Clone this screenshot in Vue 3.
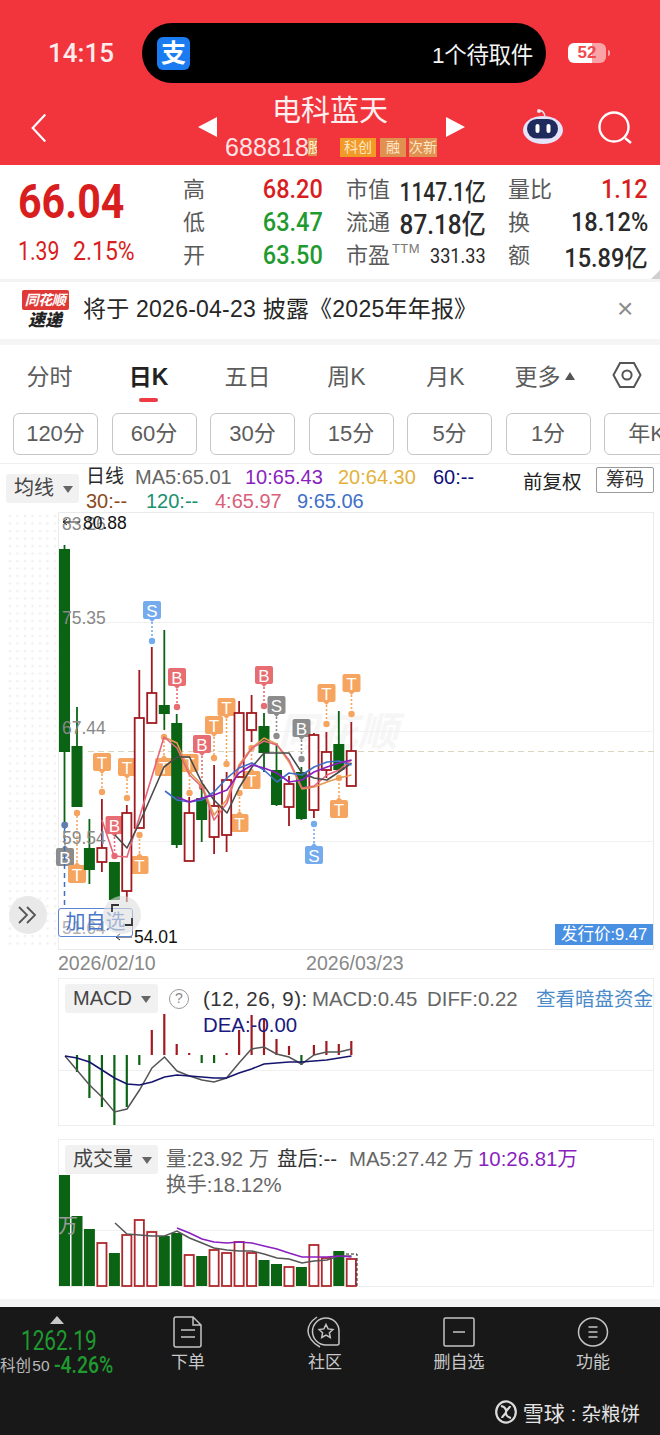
<script setup>
// 行情详情页：K 线、MACD、成交量
const step = 12.47
const cx = (i) => +(64.5 + i * step).toFixed(1)
const pts = (list) => list.map((p) => p.join(',')).join(' ')

// [实体上沿, 实体下沿, 上影, 下影, 是否阳线]
const candles = [
  [549, 752, 545, 823, 0], [746, 807, 707, 807, 0], [848, 870, 819, 884, 0], [848, 862, 799, 872, 1],
  [862, 900, 862, 900, 0], [813, 891, 805, 902, 1], [718, 828, 670, 828, 1], [693, 723, 647, 723, 1],
  [705, 714, 630, 730, 0], [723, 845, 714, 848, 0], [813, 861, 797, 861, 1], [798, 820, 788, 842, 0],
  [806, 837, 765, 854, 1], [780, 835, 772, 852, 1], [713, 777, 701, 777, 1], [713, 730, 695, 742, 1],
  [726, 753, 713, 772, 0], [770, 805, 743, 806, 0], [784, 807, 776, 826, 1], [772, 819, 767, 820, 0],
  [735, 810, 733, 818, 1], [752, 770, 732, 778, 1], [744, 770, 711, 772, 0], [751, 786, 722, 786, 1],
]

const T = '#f6a561'
const B = '#e76d72'
const S = '#74abec'
const G = '#8c8c8c'
const markers = [
  { x: 65, y: 857, d: 825, t: 'B', c: G },
  { x: 77, y: 874, d: 813, t: 'T', c: T },
  { x: 102, y: 762, d: 792, t: 'T', c: T },
  { x: 114.5, y: 825, d: 856, t: 'B', c: B },
  { x: 127, y: 767, d: 798, t: 'T', c: T },
  { x: 139.5, y: 865, d: 835, t: 'T', c: T },
  { x: 152, y: 610, d: 641, t: 'S', c: S },
  { x: 164, y: 767, d: 737, t: 'T', c: T },
  { x: 177, y: 677, d: 707, t: 'B', c: B },
  { x: 189.5, y: 763, d: 793, t: 'T', c: T },
  { x: 202, y: 744, d: 787, t: 'B', c: B },
  { x: 214, y: 725, d: 758, t: 'T', c: T },
  { x: 226.5, y: 707, d: 764, t: 'T', c: T },
  { x: 239.5, y: 823, d: 793, t: 'T', c: T },
  { x: 251.5, y: 780, d: 748, t: 'T', c: T },
  { x: 264, y: 675, d: 706, t: 'B', c: B },
  { x: 276.5, y: 705, d: 736, t: 'S', c: G },
  { x: 301.5, y: 728, d: 759, t: 'B', c: G },
  { x: 314, y: 855, d: 824, t: 'S', c: S },
  { x: 326.5, y: 693, d: 724, t: 'T', c: T },
  { x: 339, y: 809, d: 778, t: 'T', c: T },
  { x: 351.5, y: 683, d: 714, t: 'T', c: T },
]

const maLines = [
  { c: '#e59a50', p: [[164, 737], [177, 743], [189.5, 772], [202, 785], [214, 815], [226.5, 800], [239, 765], [251.5, 748], [264, 738], [276.5, 744], [289, 762], [302, 789], [314, 787], [327, 782], [339, 778], [351.5, 775]] },
  { c: '#e5667a', p: [[102, 820], [114, 856], [127, 857], [139.5, 817], [164, 737], [177, 748], [189.5, 775], [202, 787], [214, 820], [227, 803], [239, 767], [252, 748], [264, 741], [277, 745], [289, 760], [302, 788], [314, 786], [327, 775], [339, 770], [351.5, 760]] },
  { c: '#4a4a4a', p: [[115, 835], [127, 848], [139.5, 823], [164, 767], [177, 757], [189.5, 757], [202, 783], [214, 800], [227, 813], [239, 788], [252, 767], [264, 753], [277, 753], [289, 753], [302, 773], [314, 778], [327, 780], [339, 772], [351.5, 763]] },
  { c: '#3f6fc6', p: [[165, 791], [177, 800], [189.5, 802], [202, 800], [214, 792], [227, 778], [239, 768], [252, 763], [264, 770], [277, 782], [289, 773], [302, 775], [314, 767], [327, 762], [339, 761], [351.5, 765]] },
  { c: '#8a1fc0', p: [[177, 797], [189.5, 802], [202, 798], [214, 795], [227, 790], [239, 773], [252, 765], [264, 768], [277, 773], [289, 782], [302, 780], [314, 772], [327, 767], [339, 763], [351.5, 760]] },
]

const macdZero = 1055
const macdBars = [null, 1072, 1098, 1107, 1125, 1107, 1065, 1030, 1014, 1044, 1053, 1063, 1063, 1053, 1030, 1015, 1018, 1039, 1046, 1065, 1045, 1041, 1044, 1041]
const diff = [[65, 1056], [89.5, 1085], [102, 1097], [114.5, 1112], [127, 1109], [139.5, 1090], [152, 1068], [164.5, 1057], [177, 1071], [189.5, 1076], [202, 1080], [214, 1082], [226.5, 1078], [239, 1063], [251.5, 1049], [264, 1047], [276.5, 1054], [289, 1057], [301.5, 1064], [314, 1055], [326.5, 1052], [339, 1052], [351.5, 1049]]
const dea = [[65, 1056], [77, 1058], [89.5, 1062], [102, 1070], [114.5, 1078], [127, 1084], [139.5, 1085], [152, 1082], [164.5, 1077], [177, 1075], [189.5, 1076], [202, 1077], [214, 1078], [226.5, 1078], [239, 1073], [251.5, 1069], [264, 1064], [276.5, 1063], [289, 1062], [301.5, 1062], [314, 1061], [326.5, 1060], [339, 1058], [351.5, 1056]]

// [顶部, 是否阳线]
const volumes = [[1174, 0], [1215, 0], [1228, 0], [1242, 1], [1252, 0], [1234, 1], [1219, 1], [1231, 1], [1235, 0], [1232, 0], [1254, 1], [1255, 0], [1249, 1], [1252, 1], [1241, 1], [1252, 1], [1259, 0], [1263, 0], [1266, 1], [1266, 0], [1244, 1], [1257, 1], [1250, 0], [1258, 1]]
const volMa5 = [[115, 1222], [127, 1233], [139.5, 1234], [152, 1235], [164.5, 1235], [177, 1230], [189.5, 1237], [202, 1242], [214, 1247], [227, 1249], [239, 1250], [252, 1250], [264, 1253], [277, 1257], [289, 1258], [302, 1262], [314, 1260], [327, 1259], [339, 1255], [351.5, 1255]]
const volMa10 = [[177, 1227], [189.5, 1232], [202, 1238], [214, 1241], [227, 1242], [239, 1241], [252, 1242], [264, 1245], [277, 1248], [289, 1252], [302, 1256], [314, 1256], [327, 1256], [339, 1255], [351.5, 1256]]

const tabs = ['分时', '日K', '五日', '周K', '月K']
const periods = ['120分', '60分', '30分', '15分', '5分', '1分', '年K']
const axisLabels = [['83.26', 530], ['75.35', 624], ['67.44', 734], ['59.54', 844], ['51.64', 934]]

const quoteRows = [
  { a: '高', v: '68.20', vc: 'red', b: '市值', w: '1147.1亿', wc: 'w-norm', c: '量比', x: '1.12', xc: 'red' },
  { a: '低', v: '63.47', vc: 'green', b: '流通', w: '87.18亿', wc: 'w-big', c: '换', x: '18.12%', xc: 'dark' },
  { a: '开', v: '63.50', vc: 'green', b: '市盈', ttm: true, w: '331.33', wc: 'w-small', c: '额', x: '15.89亿', xc: 'dark' },
]
</script>

<template>
  <div class="page">
    <header class="hero">
      <div class="status">
        <span class="time">14:15</span>
        <div class="island">
          <span class="alipay">支</span>
          <span class="island-text">1个待取件</span>
        </div>
        <span class="battery">52</span>
        <i class="battery-nib"></i>
      </div>
      <div class="nav">
        <svg class="back" viewBox="0 0 20 34" fill="none" stroke="#fff" stroke-width="2.4">
          <path d="M17 2 3 17l14 15" />
        </svg>
        <i class="arrow-left"></i>
        <div class="stock">
          <div class="stock-name">电科蓝天</div>
          <div class="stock-sub">
            <span class="stock-code">688818</span><span class="clip-tag">股</span>
            <span class="tag tag-first">科创</span>
            <span class="tag">融</span>
            <span class="tag tag-last">次新</span>
          </div>
        </div>
        <i class="arrow-right"></i>
        <svg class="robot" viewBox="0 0 40 36">
          <path d="M16 3c3-1 5 1 6 5" stroke="#efe9f8" stroke-width="1.4" fill="none" />
          <circle cx="16" cy="3" r="2" fill="#f3e7ee" />
          <ellipse cx="20" cy="22" rx="20" ry="14" fill="#e6e4fb" />
          <rect x="4" y="11" width="31" height="19.5" rx="9.7" fill="#1f2b5c" />
          <rect x="12.5" y="16" width="4" height="9" rx="2" fill="#fff" />
          <rect x="23.5" y="16" width="4" height="9" rx="2" fill="#fff" />
        </svg>
        <svg class="search" viewBox="0 0 34 34" fill="none" stroke="#fff" stroke-width="2.4">
          <circle cx="16" cy="16" r="14.5" />
          <path d="m27 27 6 5" />
        </svg>
      </div>
    </header>

    <section class="quote">
      <div class="price-box">
        <div class="price num">66.04</div>
        <div class="change"><span class="num">1.39</span><span class="num">2.15%</span></div>
      </div>
      <div class="quote-grid">
        <template v-for="row in quoteRows" :key="row.a">
          <span class="q-label">{{ row.a }}</span>
          <span class="q-val num" :class="row.vc">{{ row.v }}</span>
          <span class="q-label q-mid">{{ row.b }}<sup v-if="row.ttm" class="ttm">TTM</sup></span>
          <span class="q-val q-right num dark" :class="row.wc">{{ row.w }}</span>
          <span class="q-label q-third">{{ row.c }}</span>
          <span class="q-val q-last num" :class="row.xc">{{ row.x }}</span>
        </template>
      </div>
      <i class="corner"></i>
    </section>

    <section class="notice">
      <div class="notice-logo">
        <span class="logo-top">同花顺</span>
        <span class="logo-bottom">速递</span>
      </div>
      <span class="notice-text">将于 2026-04-23 披露《2025年年报》</span>
      <span class="notice-close">×</span>
    </section>

    <nav class="tabs">
      <span v-for="t in tabs" :key="t" class="tab" :class="{ active: t === '日K' }">{{ t }}</span>
      <span class="tab">更多<i class="more-up"></i></span>
      <span class="tab tab-icon">
        <svg width="30" height="28" viewBox="0 0 30 28" fill="none" stroke="#555" stroke-width="2">
          <path d="M1.5 14 8 2h14l6.5 12L22 26H8z" />
          <circle cx="15" cy="14" r="4.6" />
        </svg>
      </span>
    </nav>

    <div class="periods">
      <span v-for="p in periods" :key="p" class="period">{{ p }}</span>
    </div>

    <div class="legend">
      <span class="select select-ma">均线<i class="down"></i></span>
      <div class="legend-lines">
        <div class="legend-line">
          <span class="dark w-a">日线</span>
          <span class="c-ma5 w-b">MA5:65.01</span>
          <span class="c-10 w-c">10:65.43</span>
          <span class="c-20 w-d">20:64.30</span>
          <span class="c-60">60:--</span>
        </div>
        <div class="legend-line">
          <span class="c-30 w-e">30:--</span>
          <span class="c-120 w-f">120:--</span>
          <span class="c-4 w-g">4:65.97</span>
          <span class="c-9">9:65.06</span>
        </div>
      </div>
      <span class="fq">前复权</span>
      <span class="chip">筹码</span>
    </div>

    <div class="kline">
      <svg class="chart" width="660" height="438" viewBox="0 512 660 438">
        <defs>
          <pattern id="dots" x="8" y="514" width="7.5" height="7.5" patternUnits="userSpaceOnUse">
            <circle cx="2" cy="2" r="1.3" fill="#f1f1f1" />
          </pattern>
        </defs>
        <rect x="8" y="514" width="50" height="432" fill="url(#dots)" />
        <text x="278" y="746" class="mark-bg">同花顺</text>
        <rect x="58.5" y="512.5" width="595" height="437" fill="none" stroke="#eaeaea" />
        <path d="M58 622.5h596M58 731.5h596M58 841.5h596" stroke="#f0f0f0" />
        <path d="M88 751.5h566" stroke="#d9d5bf" stroke-dasharray="6 4" />

        <g v-for="(m, i) in markers" :key="i">
          <line :x1="m.x" :x2="m.x" :y1="m.y" :y2="m.d" :stroke="m.c" stroke-width="1.6" stroke-dasharray="2 2" />
          <circle :cx="m.x" :cy="m.d" r="3.2" :fill="m.c" />
          <rect :x="m.x - 9" :y="m.y - 9" width="18" height="18" rx="2" :fill="m.c" />
          <path :d="`M${m.x - 3} ${m.y + (m.d > m.y ? 9 : -9)}h6l-3 ${m.d > m.y ? 3 : -3}z`" :fill="m.c" />
          <text :x="m.x" :y="m.y + 6.5" class="mark-t">{{ m.t }}</text>
        </g>

        <g v-for="(c, i) in candles" :key="'c' + i">
          <line :x1="cx(i)" :x2="cx(i)" :y1="c[2]" :y2="c[3]" :stroke="c[4] ? '#a01a20' : '#0b6413'" stroke-width="1.8" />
          <rect v-if="c[4]" :x="cx(i) - 4.6" :y="c[0]" width="9.2" :height="c[1] - c[0]" fill="#fff" stroke="#a01a20" stroke-width="1.8" />
          <rect v-else :x="cx(i) - 5.5" :y="c[0]" width="11" :height="c[1] - c[0]" fill="#0b6413" />
        </g>

        <polyline v-for="l in maLines" :key="l.c" :points="pts(l.p)" fill="none" :stroke="l.c" stroke-width="1.6" stroke-linejoin="round" />

        <path d="M64.5 828v80" stroke="#3f6fc6" stroke-width="1.5" stroke-dasharray="5 4" />
        <circle cx="64.5" cy="825" r="3.2" fill="#5f7fb0" />

        <text v-for="a in axisLabels" :key="a[0]" x="62" :y="a[1]" class="axis">{{ a[0] }}</text>

        <path d="M80 522H63m4-3-4 3 4 3" fill="none" stroke="#222" stroke-width="1" />
        <text x="83" y="529" class="extreme">80.88</text>
        <path d="M132 937h-16m4-3-4 3 4 3" fill="none" stroke="#222" stroke-width="1" />
        <text x="134" y="943" class="extreme">54.01</text>
      </svg>
      <button class="add-btn">加自选</button>
      <span class="fold">
        <svg width="24" height="20" viewBox="0 0 24 20" fill="none" stroke="#555" stroke-width="1.8">
          <path d="m3 2 8 8-8 8M11 2l8 8-8 8" />
        </svg>
      </span>
      <span class="focus">
        <svg width="22" height="22" viewBox="0 0 22 22" fill="none" stroke="#333" stroke-width="1.8">
          <path d="M1 8V1h7M21 14v7h-7" />
        </svg>
      </span>
      <span class="ipo">发行价:9.47</span>
    </div>

    <div class="dates">
      <span>2026/02/10</span>
      <span>2026/03/23</span>
    </div>

    <div class="panel panel-macd">
      <svg class="chart" width="660" height="150" viewBox="0 977 660 150">
        <path d="M58 978.5h596M58 1125.5h596M58.5 978v148M653.5 978v148" stroke="#eeeeee" fill="none" />
        <path d="M58 1070.5h596" stroke="#f0f0f0" />
        <g v-for="(y, i) in macdBars" :key="i">
          <line v-if="y !== null" :x1="cx(i)" :x2="cx(i)" :y1="macdZero" :y2="y"
            :stroke="(i >= 1 && i <= 6) || i === 11 || i === 12 || i === 19 ? '#0b6413' : '#a01a20'" stroke-width="2.2" />
        </g>
        <polyline :points="pts(diff)" fill="none" stroke="#555" stroke-width="1.5" />
        <polyline :points="pts(dea)" fill="none" stroke="#14146e" stroke-width="1.6" />
      </svg>
      <div class="panel-head macd-head">
        <span class="select">MACD<i class="down"></i></span>
        <span class="help">?</span>
        <div class="macd-lines">
          <div class="legend-line">
            <span class="ink w-params">(12, 26, 9):</span>
            <span class="c-ma5 w-macd">MACD:0.45</span>
            <span class="c-ma5">DIFF:0.22</span>
            <span class="c-link">查看暗盘资金</span>
          </div>
          <div class="legend-line c-dea">DEA:-0.00</div>
        </div>
      </div>
    </div>

    <div class="panel panel-vol">
      <svg class="chart" width="660" height="149" viewBox="0 1137 660 149">
        <path d="M58 1138.5h596M58 1285.5h596M58.5 1138v148M653.5 1138v148" stroke="#eeeeee" fill="none" />
        <path d="M58 1229.5h596" stroke="#f0f0f0" />
        <g v-for="(v, i) in volumes" :key="i">
          <rect v-if="v[1]" :x="cx(i) - 4.6" :y="v[0]" width="9.2" :height="1285 - v[0]" fill="#fff" stroke="#b0282d" stroke-width="1.8" />
          <rect v-else :x="cx(i) - 5.5" :y="v[0]" width="11" :height="1285 - v[0]" fill="#0b6413" />
        </g>
        <text x="58" y="1232" class="unit">万</text>
        <path d="M346 1253h11v32" fill="none" stroke="#222" stroke-dasharray="3 2" />
        <polyline :points="pts(volMa5)" fill="none" stroke="#555" stroke-width="1.5" />
        <polyline :points="pts(volMa10)" fill="none" stroke="#8a1fc0" stroke-width="1.6" />
      </svg>
      <div class="panel-head vol-head">
        <span class="select">成交量<i class="down"></i></span>
        <div class="vol-lines">
          <div class="legend-line">
            <span class="c-ma5 w-vol">量:23.92 万</span>
            <span class="ink w-after">盘后:--</span>
            <span class="c-ma5 w-ma">MA5:27.42 万</span>
            <span class="c-10">10:26.81万</span>
          </div>
          <div class="legend-line c-ma5">换手:18.12%</div>
        </div>
      </div>
    </div>

    <div class="gap"></div>

    <footer class="bottom">
      <div class="bottom-row">
        <div class="index">
          <i class="index-up"></i>
          <div class="index-value num">1262.19</div>
          <div class="index-sub"><span>科创 50</span><b class="num">-4.26%</b></div>
        </div>
        <div class="action">
          <svg width="30" height="32" viewBox="0 0 30 32" fill="none" stroke="#c4c4c4" stroke-width="1.5">
            <path d="M3 1h17l8 8v20a2 2 0 0 1-2 2H3a2 2 0 0 1-2-2V3a2 2 0 0 1 2-2zM20 1v8h8M8 14h14M8 21h14" />
          </svg>
          <span>下单</span>
        </div>
        <div class="action action-wide">
          <svg width="36" height="32" viewBox="0 0 36 32" fill="none" stroke="#c4c4c4" stroke-width="1.5">
            <path d="M19 2a13 13 0 0 1 13 13v12a2 2 0 0 1-2 2H19a13.5 13.500 0 1 1 0-27z" />
            <path d="M10 1C4 5 1 10 1 15s4 12 12 16" />
            <path d="m19 8.5 2.100 4.400 4.800.6-3.500 3.300.9 4.700-4.300-2.300-4.300 2.300.9-4.700-3.500-3.300 4.800-.6z" />
          </svg>
          <span>社区</span>
        </div>
        <div class="action">
          <svg width="32" height="30" viewBox="0 0 32 30" fill="none" stroke="#c4c4c4" stroke-width="1.5">
            <rect x="1" y="1" width="30" height="28" rx="1.5" />
            <path d="M10 15h12" />
          </svg>
          <span>删自选</span>
        </div>
        <div class="action">
          <svg width="32" height="30" viewBox="0 0 32 30" fill="none" stroke="#c4c4c4" stroke-width="1.5">
            <ellipse cx="16" cy="15" rx="14.5" ry="14" />
            <path d="M11.5 10h9M11.5 15h9M11.5 20h9" />
          </svg>
          <span>功能</span>
        </div>
      </div>
      <div class="snowball">
        <svg width="22" height="24" viewBox="0 0 22 24" fill="none" stroke="#dcdcdc" stroke-width="2.2">
          <ellipse cx="11" cy="12" rx="9.8" ry="10.6" />
          <path d="M6 6c5 1 7 6 3 9-1 1-2 2-2 3M16 18c-5-1-7-6-3-9 1-1 2-2 2-3" />
        </svg>
        <span class="snow-name">雪球</span>
        <span class="snow-user">: 杂粮饼</span>
      </div>
    </footer>
  </div>
</template>

<style>
html, body { margin: 0; background: #fff; }
</style>

<style scoped>
.page {
  width: 660px;
  height: 1435px;
  overflow: hidden;
  position: relative;
  font-family: "Liberation Sans", "Noto Sans CJK SC", sans-serif;
  color: #222;
  background: #fff;
}
.num {
  font-family: Roboto, "Liberation Sans", "Noto Sans CJK SC", sans-serif;
  font-weight: 500;
  display: inline-block;
  white-space: nowrap;
  transform-origin: left center;
}
.red { color: #d81e1e; }
.green { color: #1f9a2f; }
.dark { color: #2a2a2a; }
.ink { color: #333; }

/* 顶部红色区 */
.hero { height: 165px; background: #f2343d; color: #fff; box-sizing: border-box; padding-top: 23px; }
.status { display: flex; align-items: center; height: 60px; padding-left: 48px; }
.time { width: 94px; font-family: Roboto, sans-serif; font-size: 26px; font-weight: 500; color: #fdecec; }
.island {
  width: 404px; height: 60px; background: #000; border-radius: 30px;
  display: flex; align-items: center; justify-content: space-between;
  padding: 0 13px 0 15px; box-sizing: border-box;
}
.alipay {
  width: 33px; height: 33px; border-radius: 6px; background: #1a7cf0; color: #fff;
  font-size: 25px; line-height: 33px; text-align: center; font-weight: 700;
}
.island-text { font-size: 22.5px; color: #f4f4f4; letter-spacing: -.3px; }
.battery {
  margin-left: 22px; width: 38px; height: 20px; border-radius: 6px;
  background: linear-gradient(90deg, #fff 0 64%, #f9a3a6 64%);
  color: #ee4a50; font-size: 17px; font-weight: 700; line-height: 20px; text-align: center;
}
.battery-nib { width: 2px; height: 6px; margin-left: 2px; background: #f9a3a6; border-radius: 0 2px 2px 0; }

.nav { display: flex; align-items: flex-start; height: 82px; padding-left: 30px; }
.back { width: 18px; height: 32px; margin-top: 29px; }
.arrow-left, .arrow-right { width: 0; height: 0; border-top: 10px solid transparent; border-bottom: 10px solid transparent; margin-top: 34px; }
.arrow-left { border-right: 19px solid #fff; margin-left: 150px; }
.arrow-right { border-left: 19px solid #fff; }
.stock { width: 229px; padding-top: 11px; }
.stock-name { font-size: 29px; line-height: 34px; text-align: center; width: 226px; color: #fff0f0; }
.stock-sub { display: flex; align-items: center; height: 20px; margin-top: 9px; padding-left: 8px; }
.stock-code { font-size: 25px; letter-spacing: .1px; color: #fde3e3; width: 83px; overflow: hidden; }
.clip-tag { width: 9px; height: 18px; overflow: hidden; background: #e0904f; font-size: 14px; line-height: 18px; color: #fff3d0; }
.tag { height: 19px; line-height: 19px; width: 26px; margin-left: 4px; background: #e0904f; color: #ffe8c8; font-size: 14px; text-align: center; overflow: hidden; }
.tag-first { margin-left: 23px; width: 36px; background: #f29a26; }
.tag-last { width: 28px; white-space: nowrap; margin-left: 3px; }
.robot { width: 40px; height: 36px; margin: 25px 0 0 58px; }
.search { width: 34px; height: 34px; margin: 28px 0 0 35px; }

/* 报价 */
.quote { height: 114px; display: flex; position: relative; }
.price-box { width: 183px; padding-left: 18px; box-sizing: border-box; }
.price { font-size: 49px; line-height: 56px; margin-top: 9px; color: #d81e1e; font-weight: 700; transform: scaleX(.84); display: block; }
.change { display: flex; font-size: 25px; line-height: 30px; margin-top: 7px; color: #d81e1e; }
.change .num { font-weight: 400; transform: scaleX(.85); }
.change .num:first-child { width: 55px; }
.change .num:last-child { transform: scaleX(.92); }
.quote-grid {
  display: grid; grid-template-columns: 81px 59px 23px 44px 96px 22px 44px 96px;
  grid-auto-rows: 33px; padding-top: 8px; align-items: center;
}
.q-label { font-size: 22px; color: #5a5a5a; white-space: nowrap; margin-bottom: 6px; }
.q-val { font-size: 25px; justify-self: end; transform-origin: right center; transform: scaleX(.94); }
.q-mid { grid-column: 3 / 5; padding-left: 23px; position: relative; }
.q-right { grid-column: 5; }
.q-third { grid-column: 6 / 8; padding-left: 22px; }
.q-last { grid-column: 8; }
.w-norm { transform: scaleX(.84); }
.w-big { font-size: 27px; transform: scaleX(.9); }
.w-small { font-size: 21px; font-weight: 400; transform: scaleX(.86); }
.ttm { position: absolute; left: 69px; top: 4px; font-size: 13px; line-height: 15px; color: #777; letter-spacing: .4px; }
.corner { position: absolute; right: 0; bottom: 0; width: 0; height: 0; border-left: 9px solid transparent; border-bottom: 9px solid #cfcfcf; }

/* 提示条 */
.notice {
  height: 66px; display: flex; align-items: center; box-sizing: border-box;
  border-top: 3px solid #f3f3f3; border-bottom: 6px solid #f5f5f5; padding-left: 21px; position: relative;
}
.notice-logo { width: 48px; display: flex; flex-direction: column; align-items: center; }
.logo-top { width: 47px; height: 20px; line-height: 20px; background: #e03a36; color: #fff; font-size: 14px; font-weight: 700; font-style: italic; text-align: center; border-radius: 2px; letter-spacing: -.5px; }
.logo-bottom { font-size: 17px; line-height: 20px; font-weight: 900; font-style: italic; color: #222; margin-top: 1px; }
.notice-text { margin: 0 0 7px 14px; font-size: 23px; color: #262626; white-space: nowrap; letter-spacing: .23px; }
.notice-close { position: absolute; left: 617px; top: 10px; font-size: 28px; line-height: 34px; color: #8c8c8c; }

/* 周期 */
.tabs { display: flex; height: 65px; align-items: center; }
.tab { width: 99px; text-align: center; font-size: 23px; color: #5c5c5c; position: relative; white-space: nowrap; padding-bottom: 6px; }
.tab.active { color: #222; font-weight: 700; }
.tab.active::after { content: ""; position: absolute; left: 40px; top: 40px; width: 19px; height: 4px; border-radius: 2px; background: #ee3a42; }
.tab-icon { width: 66px; }
.tab-icon svg { display: block; margin: 0 auto; }
.more-up { display: inline-block; margin-left: 4px; vertical-align: 5px; border-left: 5px solid transparent; border-right: 5px solid transparent; border-bottom: 8px solid #555; }
.periods { display: flex; gap: 13.5px; padding: 3px 0 8px 13px; border-bottom: 1px solid #eeeeee; overflow: hidden; }
.period {
  flex: 0 0 85px; height: 42px; box-sizing: border-box; border: 1px solid #c6c6c6; border-radius: 6px;
  font-size: 22px; line-height: 40px; text-align: center; color: #5c5c5c; white-space: nowrap;
}

/* 图例 */
.legend { height: 48px; display: flex; position: relative; }
.select {
  width: 93px; height: 29px; box-sizing: border-box; background: #f1f1f1; border-radius: 3px;
  font-size: 20px; line-height: 29px; color: #444; padding-left: 8px; white-space: nowrap; display: block;
}
.select-ma { width: 73px; margin: 10px 0 0 6px; }
.down { display: inline-block; margin-left: 9px; vertical-align: 2px; border-left: 5.5px solid transparent; border-right: 5.5px solid transparent; border-top: 7px solid #666; }
.legend-lines { margin: 1px 0 0 7px; }
.legend-line { display: flex; font-size: 20px; line-height: 24px; white-space: nowrap; }
.w-a { width: 49px; font-size: 19px; }
.w-b { width: 110px; }
.w-c { width: 93px; }
.w-d { width: 95px; }
.w-e { width: 60px; }
.w-f { width: 69px; }
.w-g { width: 82px; }
.w-params { width: 109px; letter-spacing: .5px; }
.w-macd { width: 115px; }
.w-vol { width: 111px; }
.w-after { width: 72px; }
.w-ma { width: 129px; }
.c-ma5 { color: #666; }
.c-10 { color: #8a1fc0; }
.c-20 { color: #e3b23a; }
.c-60 { color: #10107a; }
.c-30 { color: #8a4a20; }
.c-120 { color: #1a9070; }
.c-4 { color: #d8607a; }
.c-9 { color: #4070c8; }
.c-dea { color: #1a1a80; }
.c-link { color: #4a8ac8; font-size: 19.5px; position: absolute; left: 471px; }
.fq { position: absolute; left: 523px; top: 5px; font-size: 19.5px; line-height: 26px; color: #222; }
.chip { position: absolute; left: 596px; top: 3px; width: 58px; height: 26px; box-sizing: border-box; border: 1px solid #9a9a9a; border-radius: 2px; font-size: 19px; line-height: 24px; text-align: center; color: #333; }

/* K 线 */
.kline { position: relative; height: 438px; }
.chart { display: block; }
.chart text { font-family: "Liberation Sans", "Noto Sans CJK SC", sans-serif; }
.mark-bg { font-size: 40px; font-weight: 700; font-style: italic; fill: #f6f6f6; }
.mark-t { font-size: 17px; fill: #fff; text-anchor: middle; }
.axis { font-size: 17.5px; fill: #888; }
.extreme { font-size: 17.5px; fill: #111; }
.add-btn {
  position: absolute; left: 58px; top: 396px; width: 75px; height: 29px; padding: 0; box-sizing: border-box;
  background: rgba(255, 255, 255, .35); border: 1px solid #5a86d6; border-radius: 3px; color: #4a76c8;
  font: 20px/27px "Liberation Sans", "Noto Sans CJK SC", sans-serif;
}
.fold { position: absolute; left: 9px; top: 384px; width: 38px; height: 38px; border-radius: 50%; background: #e9e9e9; display: flex; align-items: center; justify-content: center; }
.focus { position: absolute; left: 103px; top: 384px; width: 38px; height: 38px; border-radius: 50%; background: rgba(222, 222, 222, .6); display: flex; align-items: center; justify-content: center; }
.ipo { position: absolute; left: 555px; top: 412px; width: 98px; height: 21px; background: #4a90e2; color: #fff; font-size: 16.5px; line-height: 21px; text-align: center; white-space: nowrap; }
.dates { height: 27px; padding-left: 58px; display: flex; gap: 150.5px; font-size: 19.5px; line-height: 27px; color: #888; }

/* 副图 */
.panel { position: relative; }
.panel-macd { height: 161px; }
.panel-vol { height: 149px; }
.panel-head { position: absolute; left: 65px; top: 7px; display: flex; }
.help { width: 20px; height: 20px; margin: 5px 0 0 11px; box-sizing: border-box; border: 1.5px solid #999; border-radius: 50%; font-size: 14px; line-height: 17px; text-align: center; color: #888; }
.macd-lines { margin: 2px 0 0 14px; }
.macd-lines .legend-line { line-height: 26px; font-size: 20.4px; }
.macd-lines .c-link { font-size: 19.5px; }
.vol-lines { margin: 1px 0 0 8px; }
.vol-lines .legend-line { line-height: 26px; font-size: 20.4px; }
.unit { font-size: 20px; fill: #9a9a9a; }

.gap { height: 20px; box-sizing: border-box; border-top: 12px solid #fff; background: #f5f5f5; }

/* 底栏 */
.bottom { height: 130px; background: #181818; color: #c8c8c8; }
.bottom-row { display: flex; height: 76px; }
.index { width: 121px; position: relative; }
.index-up { position: absolute; left: 50px; top: 9px; border-left: 7px solid transparent; border-right: 7px solid transparent; border-bottom: 8px solid #c8c8c8; }
.index-value { position: absolute; left: 21px; top: 19px; font-size: 27px; line-height: 30px; color: #1f9a2f; font-weight: 400; transform: scaleX(.77); }
.index-sub { position: absolute; left: 0; top: 46px; display: flex; align-items: center; font-size: 15.5px; word-spacing: -3px; line-height: 26px; white-space: nowrap; color: #bbb; }
.index-sub b { position: absolute; left: 54px; font-size: 23px; color: #1f9a2f; transform: scaleX(.84); }
.action { width: 134px; display: flex; flex-direction: column; align-items: center; padding-top: 9px; box-sizing: border-box; }
.action-wide { margin-left: 3px; }
.action svg { height: 32px; display: block; }
.action span { font-size: 17px; line-height: 24px; margin-top: 3px; }
.snowball { display: flex; align-items: center; justify-content: flex-end; padding: 14px 20px 0 0; color: #e4e4e4; }
.snow-name { font-size: 21px; margin-left: 6px; }
.snow-user { font-size: 19.5px; margin-left: 6px; white-space: nowrap; }
</style>
